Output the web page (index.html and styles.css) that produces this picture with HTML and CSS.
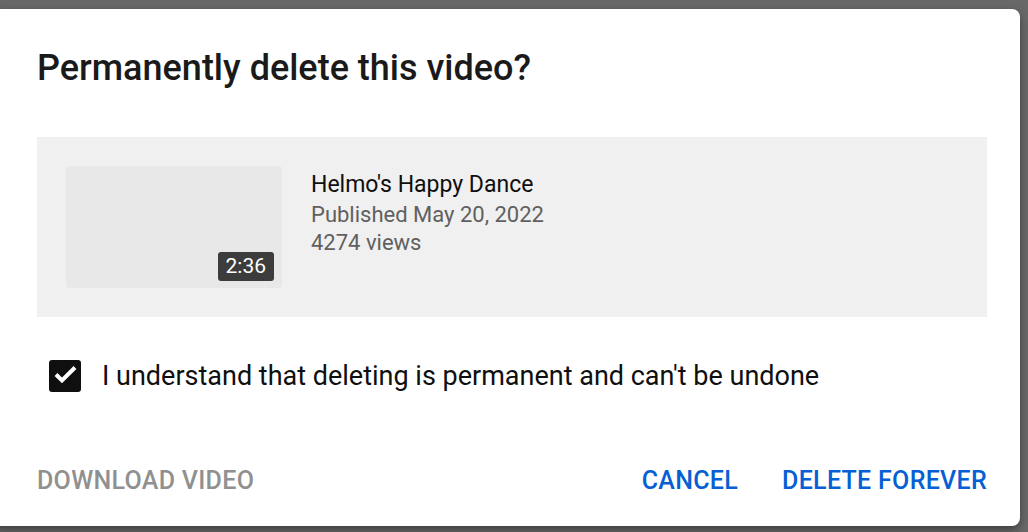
FILE: index.html
```html
<!DOCTYPE html>
<html lang="en">
<head>
  <meta charset="UTF-8">
  <title>Permanently delete this video?</title>
  <link rel="stylesheet" href="styles.css">
</head>
<body>

  <div class="dialog">
    <h2 class="title">Permanently delete this video?</h2>

    <div class="video-card">
      <div class="thumb">
        <span class="duration">2:36</span>
      </div>
      <div class="video-info">
        <div class="video-title">Helmo's Happy Dance</div>
        <div class="video-meta">Published May 20, 2022</div>
        <div class="video-meta">4274 views</div>
      </div>
    </div>

    <label class="confirm">
      <span class="checkbox">
        <svg viewBox="0 0 32 32" width="32" height="32"><path d="M7 14.5l6 6L26 7.5" fill="none" stroke="#fff" stroke-width="4"/></svg>
      </span>
      I understand that deleting is permanent and can't be undone
    </label>

    <div class="actions">
      <button class="btn btn-disabled">Download video</button>
      <div class="spacer"></div>
      <button class="btn btn-blue">Cancel</button>
      <button class="btn btn-blue">Delete forever</button>
    </div>
  </div>

</body>
</html>
```

FILE: styles.css
```css
html, body {
  margin: 0;
  height: 100%;
  overflow: hidden;
}

body {
  background: #686868;
  font-family: Roboto, "Liberation Sans", Arial, sans-serif;
}

.dialog {
  box-sizing: border-box;
  width: 1028px;
  height: 517px;
  margin: 9px 0 0 -8px;
  padding: 37px 33px 0 45px;
  background: #fff;
  border-radius: 8px;
  box-shadow: 0 4px 8px rgba(0, 0, 0, 0.4);
}

.title {
  margin: 0;
  font-size: 36px;
  font-weight: 500;
  line-height: 44px;
  color: #1a1a1a;
}

.video-card {
  display: flex;
  height: 180px;
  box-sizing: border-box;
  margin-top: 47px;
  padding: 29px;
  background: #f0f0f0;
}

.thumb {
  position: relative;
  flex: none;
  width: 216px;
  height: 122px;
  background: #e8e8e8;
  border-radius: 4px;
}

.duration {
  position: absolute;
  right: 8px;
  bottom: 7px;
  padding: 0 8px;
  height: 29px;
  line-height: 29px;
  background: #3c3c3c;
  color: #fff;
  font-size: 21px;
  border-radius: 3px;
}

.video-info {
  margin-left: 29px;
  padding-top: 4px;
}

.video-title {
  font-size: 23px;
  line-height: 30px;
  color: #0f0f0f;
  margin-bottom: 1px;
}

.video-meta {
  font-size: 22px;
  line-height: 28px;
  color: #606060;
}

.confirm {
  display: flex;
  align-items: center;
  margin-top: 43px;
  margin-left: 12px;
  font-size: 27px;
  color: #0f0f0f;
}

.checkbox {
  display: flex;
  flex: none;
  width: 32px;
  height: 32px;
  margin-right: 21px;
  background: #0f0f0f;
  border-radius: 3px;
}

.actions {
  display: flex;
  align-items: center;
  margin-top: 74px;
}

.spacer {
  flex: 1;
}

.btn {
  padding: 0;
  border: none;
  background: none;
  font-family: inherit;
  font-size: 25px;
  font-weight: 500;
  text-transform: uppercase;
  letter-spacing: 0.3px;
  cursor: pointer;
}

.btn-disabled {
  color: #909090;
}

.btn-blue {
  color: #065fd4;
  margin-left: 44px;
}
```
